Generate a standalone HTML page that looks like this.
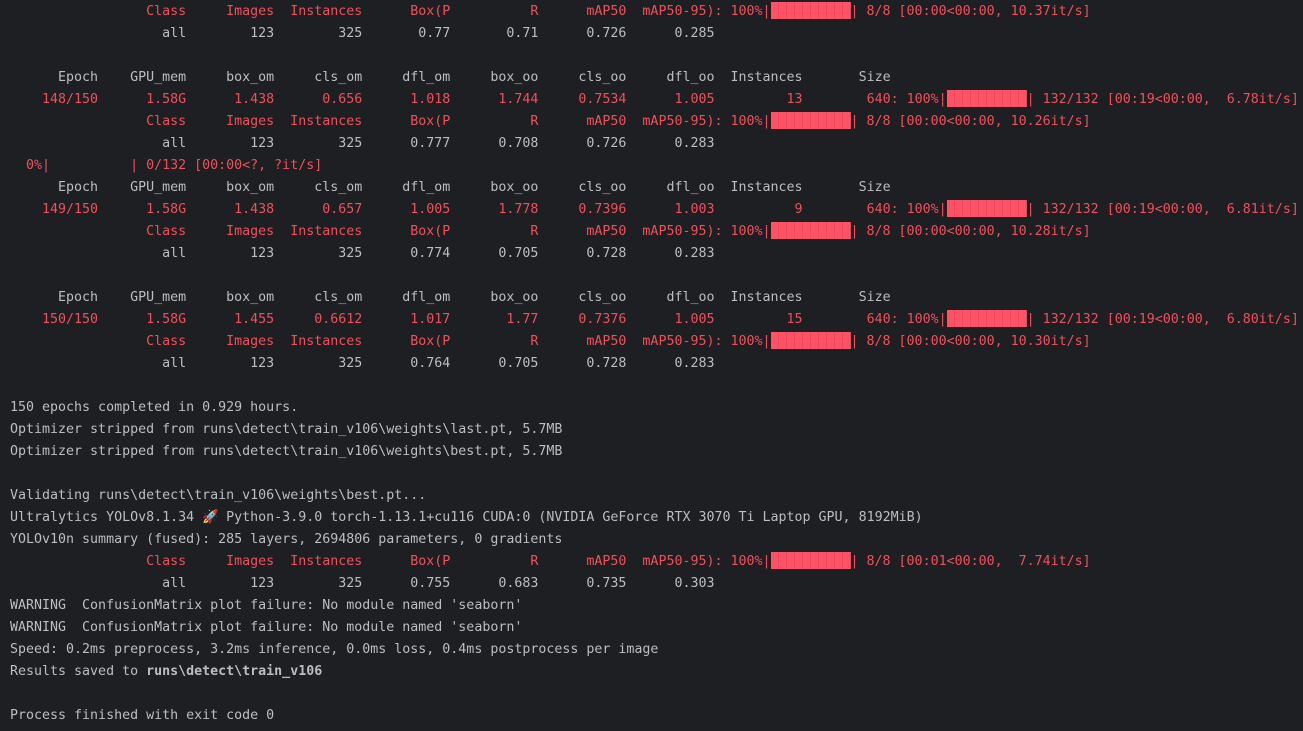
<!DOCTYPE html>
<html><head><meta charset="utf-8"><style>
html,body{margin:0;padding:0;background:#1e1f22;width:1303px;height:731px;overflow:hidden}
pre{margin:0;padding:0 0 0 10px;position:relative;top:1px;font-family:"DejaVu Sans Mono","Liberation Mono",monospace;font-size:13.31px;line-height:22px;color:#bcbec4;white-space:pre}
.r{color:#f0505c}
.b{display:inline-block;width:80px;height:17px;vertical-align:-4px;background:repeating-linear-gradient(90deg,#ff5266 0 7px,#e84a5c 7px 8px)}
b{font-weight:bold}
</style></head><body><pre><span class="r">                 Class     Images  Instances      Box(P          R      mAP50  mAP50-95): 100%|<span class="b"></span>| 8/8 [00:00&lt;00:00, 10.37it/s]</span>
                   all        123        325       0.77       0.71      0.726      0.285

      Epoch    GPU_mem     box_om     cls_om     dfl_om     box_oo     cls_oo     dfl_oo  Instances       Size
<span class="r">    148/150      1.58G      1.438      0.656      1.018      1.744     0.7534      1.005         13        640: 100%|<span class="b"></span>| 132/132 [00:19&lt;00:00,  6.78it/s]</span>
<span class="r">                 Class     Images  Instances      Box(P          R      mAP50  mAP50-95): 100%|<span class="b"></span>| 8/8 [00:00&lt;00:00, 10.26it/s]</span>
                   all        123        325      0.777      0.708      0.726      0.283
<span class="r">  0%|          | 0/132 [00:00&lt;?, ?it/s]</span>
      Epoch    GPU_mem     box_om     cls_om     dfl_om     box_oo     cls_oo     dfl_oo  Instances       Size
<span class="r">    149/150      1.58G      1.438      0.657      1.005      1.778     0.7396      1.003          9        640: 100%|<span class="b"></span>| 132/132 [00:19&lt;00:00,  6.81it/s]</span>
<span class="r">                 Class     Images  Instances      Box(P          R      mAP50  mAP50-95): 100%|<span class="b"></span>| 8/8 [00:00&lt;00:00, 10.28it/s]</span>
                   all        123        325      0.774      0.705      0.728      0.283

      Epoch    GPU_mem     box_om     cls_om     dfl_om     box_oo     cls_oo     dfl_oo  Instances       Size
<span class="r">    150/150      1.58G      1.455     0.6612      1.017       1.77     0.7376      1.005         15        640: 100%|<span class="b"></span>| 132/132 [00:19&lt;00:00,  6.80it/s]</span>
<span class="r">                 Class     Images  Instances      Box(P          R      mAP50  mAP50-95): 100%|<span class="b"></span>| 8/8 [00:00&lt;00:00, 10.30it/s]</span>
                   all        123        325      0.764      0.705      0.728      0.283

150 epochs completed in 0.929 hours.
Optimizer stripped from runs\detect\train_v106\weights\last.pt, 5.7MB
Optimizer stripped from runs\detect\train_v106\weights\best.pt, 5.7MB

Validating runs\detect\train_v106\weights\best.pt...
Ultralytics YOLOv8.1.34 <span style="display:inline-block;width:16px;text-align:center;color:#e05060">🚀</span> Python-3.9.0 torch-1.13.1+cu116 CUDA:0 (NVIDIA GeForce RTX 3070 Ti Laptop GPU, 8192MiB)
YOLOv10n summary (fused): 285 layers, 2694806 parameters, 0 gradients
<span class="r">                 Class     Images  Instances      Box(P          R      mAP50  mAP50-95): 100%|<span class="b"></span>| 8/8 [00:01&lt;00:00,  7.74it/s]</span>
                   all        123        325      0.755      0.683      0.735      0.303
WARNING  ConfusionMatrix plot failure: No module named 'seaborn'
WARNING  ConfusionMatrix plot failure: No module named 'seaborn'
Speed: 0.2ms preprocess, 3.2ms inference, 0.0ms loss, 0.4ms postprocess per image
Results saved to <b>runs\detect\train_v106</b>

Process finished with exit code 0</pre></body></html>
